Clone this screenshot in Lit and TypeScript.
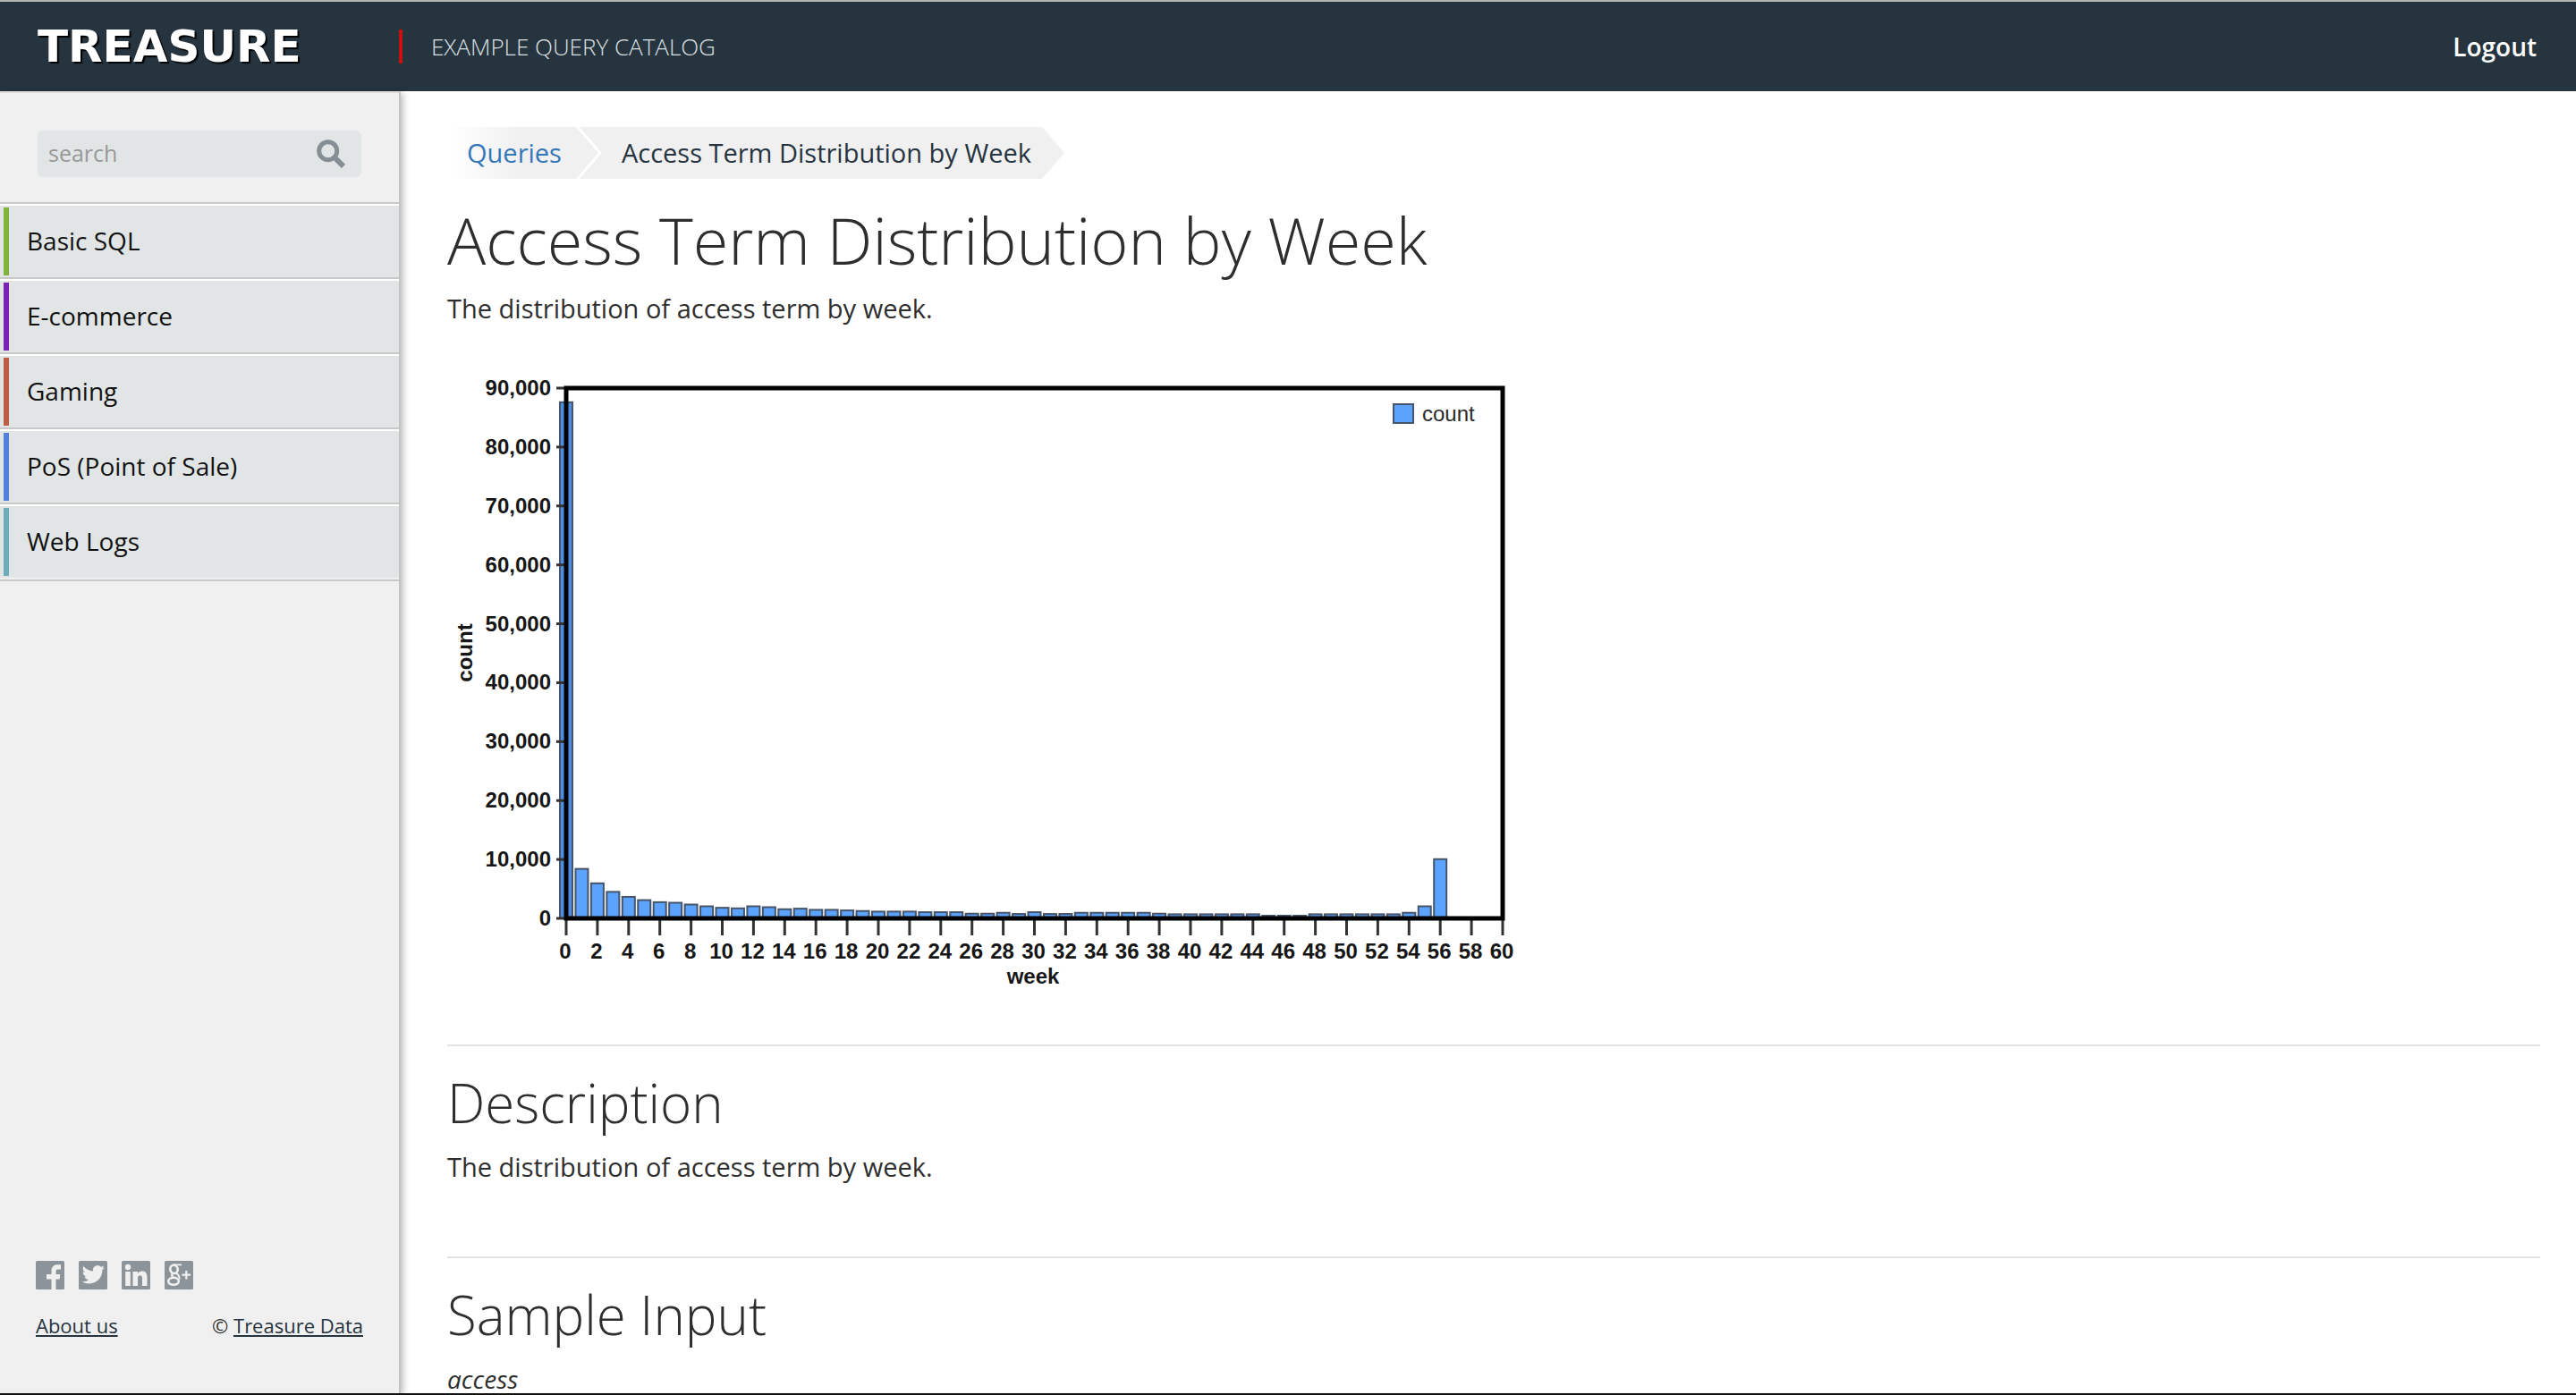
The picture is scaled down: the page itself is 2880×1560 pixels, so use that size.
import { LitElement, html, svg, css } from "lit";
import { customElement } from "lit/decorators.js";

interface Category {
  name: string;
  tone: string;
}

const CATEGORIES: Category[] = [
  { name: "Basic SQL", tone: "green" },
  { name: "E-commerce", tone: "purple" },
  { name: "Gaming", tone: "rust" },
  { name: "PoS (Point of Sale)", tone: "blue" },
  { name: "Web Logs", tone: "teal" },
];

/* Access count for each week, starting with week 0. */
const COUNTS = [
  87600, 8400, 5950, 4500, 3650, 3100, 2750, 2650, 2350, 2050, 1800, 1700, 2050,
  1900, 1550, 1650, 1450, 1450, 1350, 1250, 1150, 1150, 1150, 1050, 1050, 1050,
  800, 800, 950, 750, 1050, 750, 750, 950, 950, 950, 950, 950, 800, 700, 700,
  700, 700, 700, 700, 450, 450, 450, 700, 700, 700, 700, 700, 700, 950, 2050,
  10050,
];

@customElement("week-chart")
export class WeekChart extends LitElement {
  static styles = css`
    :host {
      display: block;
    }
    .chart {
      display: block;
      width: 100%;
      max-width: 1200px;
      height: auto;
    }
    .label {
      font: bold 24px "Liberation Sans", Arial, sans-serif;
      fill: #161616;
    }
    .legend {
      font: 24px "Liberation Sans", Arial, sans-serif;
      fill: #2a2a2a;
    }
    .end {
      text-anchor: end;
    }
    .middle {
      text-anchor: middle;
    }
    .bar {
      fill: #5ba3ff;
      stroke: #47556a;
      stroke-width: 2;
    }
    .first {
      fill: #4c8ee2;
    }
    .tick {
      stroke: #333;
      stroke-width: 3;
    }
    .frame {
      fill: none;
      stroke: #000;
      stroke-width: 5;
    }
  `;

  render() {
    const left = 133;
    const right = 1180;
    const top = 34;
    const bottom = 627;
    const x = (week: number) => left + ((right - left) * week) / 60;
    const y = (count: number) => bottom - ((bottom - top) * count) / 90000;
    const yTicks = Array.from({ length: 10 }, (_, i) => i * 10000);
    const xTicks = Array.from({ length: 31 }, (_, i) => i * 2);

    return html`
      <svg class="chart" viewBox="0 0 1200 720" role="img" aria-label="count by week">
        ${COUNTS.map(
          (count, week) => svg`<rect class=${week === 0 ? "bar first" : "bar"}
            x=${x(week) - 7} y=${y(count)} width="14" height=${bottom - y(count)} />`
        )}
        ${yTicks.map(
          (v) => svg`
            <line class="tick" x1="122" x2=${left} y1=${y(v)} y2=${y(v)} />
            <text class="label end" x="116" y=${y(v) + 8}>${v.toLocaleString("en-US")}</text>`
        )}
        ${xTicks.map(
          (v) => svg`
            <line class="tick" x1=${x(v)} x2=${x(v)} y1=${bottom} y2="646" />
            <text class="label middle" x=${x(v) - 1} y="672">${v}</text>`
        )}
        <rect class="frame" x=${left} y=${top} width=${right - left} height=${bottom - top} />
        <text class="label middle" x="655" y="700">week</text>
        <text class="label middle" transform="translate(28 330) rotate(-90)">count</text>
        <rect class="bar" x="1058" y="52" width="22" height="21" />
        <text class="legend" x="1090" y="71">count</text>
      </svg>
    `;
  }
}

@customElement("app-root")
export class AppRoot extends LitElement {
  static styles = css`
    :host {
      display: flex;
      flex-direction: column;
      box-sizing: border-box;
      height: 100vh;
      overflow: hidden;
      border-top: 2px solid #b4b6b4;
      border-bottom: 2px solid #111;
      background: #fff;
      color: #2e2e2e;
      font: 28px/40px "Open Sans", "Noto Sans", sans-serif;
    }
    * {
      box-sizing: border-box;
    }
    h1,
    h2,
    p,
    ul,
    ol {
      margin: 0;
      padding: 0;
    }
    ul,
    ol {
      list-style: none;
    }
    a {
      color: inherit;
      text-decoration: none;
    }

    .header {
      display: flex;
      flex: none;
      align-items: center;
      height: 100px;
      padding-right: 44px;
      background: #26343f;
      color: #fff;
    }
    .brand {
      width: 446px;
      padding-left: 42px;
      font: bold 50px/60px "DejaVu Sans", sans-serif;
      text-shadow: 2px 2px 1px #000;
    }
    .catalog {
      display: flex;
      align-items: center;
      height: 38px;
      padding-left: 32px;
      border-left: 4px solid #c9100f;
      color: #dde0e2;
      font-size: 26px;
      font-weight: 300;
    }
    .logout {
      margin-left: auto;
      font-weight: 600;
    }

    .body {
      display: flex;
      flex: 1;
      min-height: 0;
    }
    .sidebar {
      display: flex;
      flex: none;
      flex-direction: column;
      width: 448px;
      border-top: 2px solid #dcdcdc;
      border-right: 2px solid #c4c4c4;
      background: #f0f0f0;
      box-shadow: 2px 2px 8px rgba(0, 0, 0, 0.3);
    }
    .search {
      display: flex;
      align-items: center;
      height: 52px;
      margin: 42px 42px 28px;
      padding: 0 18px 0 12px;
      border-radius: 6px;
      background: #e1e5e5;
    }
    .query {
      flex: 1;
      min-width: 0;
      height: 40px;
      padding: 0 0 2px;
      border: 0;
      outline: 0;
      background: none;
      color: #333;
      font: 25px/38px "Open Sans", "Noto Sans", sans-serif;
    }
    .query::placeholder {
      color: #999;
      opacity: 1;
    }
    .find {
      display: flex;
      padding: 0;
      border: 0;
      background: none;
      color: #858e94;
    }
    .icon {
      display: block;
      width: 32px;
      height: 32px;
    }

    .categories {
      border-top: 2px solid #c8c8c8;
      border-bottom: 2px solid #c8c8c8;
    }
    .category {
      border-top: 2px solid #fff;
      border-bottom: 2px solid #c8c8c8;
      background: #e1e5e5;
      color: #111;
    }
    .category:last-child {
      border-bottom-color: #f0f0f0;
    }
    .category-link {
      display: flex;
      height: 80px;
      padding: 2px 4px;
      line-height: 74px;
    }
    .category-link::before {
      width: 6px;
      height: 76px;
      margin-right: 20px;
      background: var(--tone);
      content: "";
    }
    .green {
      --tone: #80b33b;
    }
    .purple {
      --tone: #7b22b4;
    }
    .rust {
      --tone: #bc5d48;
    }
    .blue {
      --tone: #5180dd;
    }
    .teal {
      --tone: #6dacba;
    }

    .footer {
      display: flex;
      flex-direction: column;
      gap: 24px;
      margin-top: auto;
      padding: 0 40px 60px;
    }
    .social {
      display: flex;
      gap: 16px;
    }
    .social-link {
      display: block;
      color: #8c9499;
    }
    .legal {
      display: flex;
      justify-content: space-between;
      font-size: 22px;
      line-height: 32px;
    }
    .legal-link {
      color: #26343f;
      text-decoration: underline;
      text-decoration-thickness: 2px;
      text-underline-offset: 2px;
    }

    .content {
      flex: 1;
      min-width: 0;
      padding: 40px 40px 0 52px;
    }
    .crumbs {
      display: flex;
      margin-bottom: 28px;
      font-size: 29px;
      line-height: 58px;
    }
    .crumb {
      padding: 0 41px 0 22px;
      background: linear-gradient(90deg, #fff, #f0f0f0 80px);
      clip-path: polygon(0 0, calc(100% - 25px) 0, 100% 50%, calc(100% - 25px) 100%, 0 100%);
      color: #3477b8;
    }
    .current {
      margin-left: -21px;
      padding: 0 37px 0 47px;
      background: #f0f0f0;
      clip-path: polygon(
        0 0,
        calc(100% - 25px) 0,
        100% 50%,
        calc(100% - 25px) 100%,
        0 100%,
        25px 50%
      );
      color: #26343f;
    }
    .title {
      margin-bottom: 17px;
      font-size: 72px;
      font-weight: 300;
      line-height: 80px;
    }
    .text {
      font-size: 29px;
    }
    .chart {
      margin: 35px 0 48px;
    }
    .section {
      padding: 30px 0 80px;
      border-top: 2px solid #e1e5e5;
    }
    .heading {
      margin-bottom: 19px;
      font-size: 60px;
      font-weight: 300;
      line-height: 66px;
    }
    .table-name {
      font-style: italic;
    }
  `;

  render() {
    return html`
      <header class="header">
        <a class="brand" href="#">TREASURE</a>
        <span class="catalog">EXAMPLE QUERY CATALOG</span>
        <a class="logout" href="#logout">Logout</a>
      </header>
      <div class="body">
        <aside class="sidebar">
          <form class="search" role="search">
            <input class="query" type="text" placeholder="search" aria-label="search" />
            <button class="find" type="submit" aria-label="search">
              <svg class="icon" viewBox="0 0 32 32" fill="none" stroke="currentColor">
                <circle cx="12.7" cy="12.7" r="10" stroke-width="5" />
                <path d="M19.5 19.5 30 30" stroke-width="6" />
              </svg>
            </button>
          </form>
          <nav>
            <ul class="categories">
              ${CATEGORIES.map(
                (c) => html`<li class="category">
                  <a class="category-link ${c.tone}" href="#">${c.name}</a>
                </li>`
              )}
            </ul>
          </nav>
          <div class="footer">
            <div class="social">
              <a class="social-link" href="#facebook" aria-label="Facebook">
                <svg class="icon" viewBox="0 0 32 32">
                  <rect width="32" height="32" rx="1.5" fill="currentColor" />
                  <path
                    fill="#f0f0f0"
                    d="M17.5 32V20.5H12V15h5.5V11.5C17.5 7 20 4.3 24 4.3h4v5.3h-2.8c-2 0-2.7.8-2.7 2.5V15h4.8l-.7 5.5h-4.1V32z"
                  />
                </svg>
              </a>
              <a class="social-link" href="#twitter" aria-label="Twitter">
                <svg class="icon" viewBox="0 0 32 32">
                  <rect width="32" height="32" rx="1.5" fill="currentColor" />
                  <path
                    fill="#f0f0f0"
                    transform="translate(3.7 2.7) scale(1.05)"
                    d="M23.953 4.57a10 10 0 01-2.825.775 4.958 4.958 0 002.163-2.723c-.951.555-2.005.959-3.127 1.184a4.92 4.92 0 00-8.384 4.482C7.69 8.095 4.067 6.13 1.64 3.162a4.822 4.822 0 00-.666 2.475c0 1.71.87 3.213 2.188 4.096a4.904 4.904 0 01-2.228-.616v.06a4.923 4.923 0 003.946 4.827 4.996 4.996 0 01-2.212.085 4.936 4.936 0 004.604 3.417 9.867 9.867 0 01-6.102 2.105c-.39 0-.779-.023-1.17-.067a13.995 13.995 0 007.557 2.209c9.053 0 13.998-7.496 13.998-13.985 0-.21 0-.42-.015-.63A9.935 9.935 0 0024 4.59z"
                  />
                </svg>
              </a>
              <a class="social-link" href="#linkedin" aria-label="LinkedIn">
                <svg class="icon" viewBox="0 0 32 32">
                  <rect width="32" height="32" rx="1.5" fill="currentColor" />
                  <circle cx="7" cy="7" r="3.2" fill="#f0f0f0" />
                  <path
                    fill="#f0f0f0"
                    d="M4.2 12h5.6v16H4.2zM12.5 12H18v2.2c1-1.6 2.6-2.6 4.8-2.6 4.2 0 5.7 2.7 5.7 7V28H23v-8.4c0-2-.5-3.4-2.3-3.4-1.9 0-2.7 1.4-2.7 3.4V28h-5.5z"
                  />
                </svg>
              </a>
              <a class="social-link" href="#google-plus" aria-label="Google+">
                <svg class="icon" viewBox="0 0 32 32" fill="none" stroke="#f0f0f0">
                  <rect width="32" height="32" rx="1.5" fill="currentColor" stroke="none" />
                  <ellipse cx="10.5" cy="9.3" rx="4.2" ry="4.7" stroke-width="2.6" transform="rotate(-12 10.5 9.3)" />
                  <path d="M10.5 4.4H19" stroke-width="1.8" />
                  <path d="M9.5 14c-2 1.4-1.8 3 .2 4" stroke-width="2.4" />
                  <ellipse cx="10" cy="22.8" rx="5.8" ry="4" stroke-width="2.6" />
                  <path d="M13 13.5c2 1.6 4 3.6 3.4 7" stroke-width="2" />
                  <path d="M24.3 11v9.5M19.5 15.7h9.5" stroke-width="2.2" />
                </svg>
              </a>
            </div>
            <div class="legal">
              <a class="legal-link" href="#about">About us</a>
              <span>© <a class="legal-link" href="#company">Treasure Data</a></span>
            </div>
          </div>
        </aside>
        <main class="content">
          <nav aria-label="Breadcrumb">
            <ol class="crumbs">
              <li class="crumb"><a href="#queries">Queries</a></li>
              <li class="current" aria-current="page">Access Term Distribution by Week</li>
            </ol>
          </nav>
          <h1 class="title">Access Term Distribution by Week</h1>
          <p class="text">The distribution of access term by week.</p>
          <week-chart class="chart"></week-chart>
          <section class="section">
            <h2 class="heading">Description</h2>
            <p class="text">The distribution of access term by week.</p>
          </section>
          <section class="section">
            <h2 class="heading">Sample Input</h2>
            <p class="table-name">access</p>
          </section>
        </main>
      </div>
    `;
  }
}
